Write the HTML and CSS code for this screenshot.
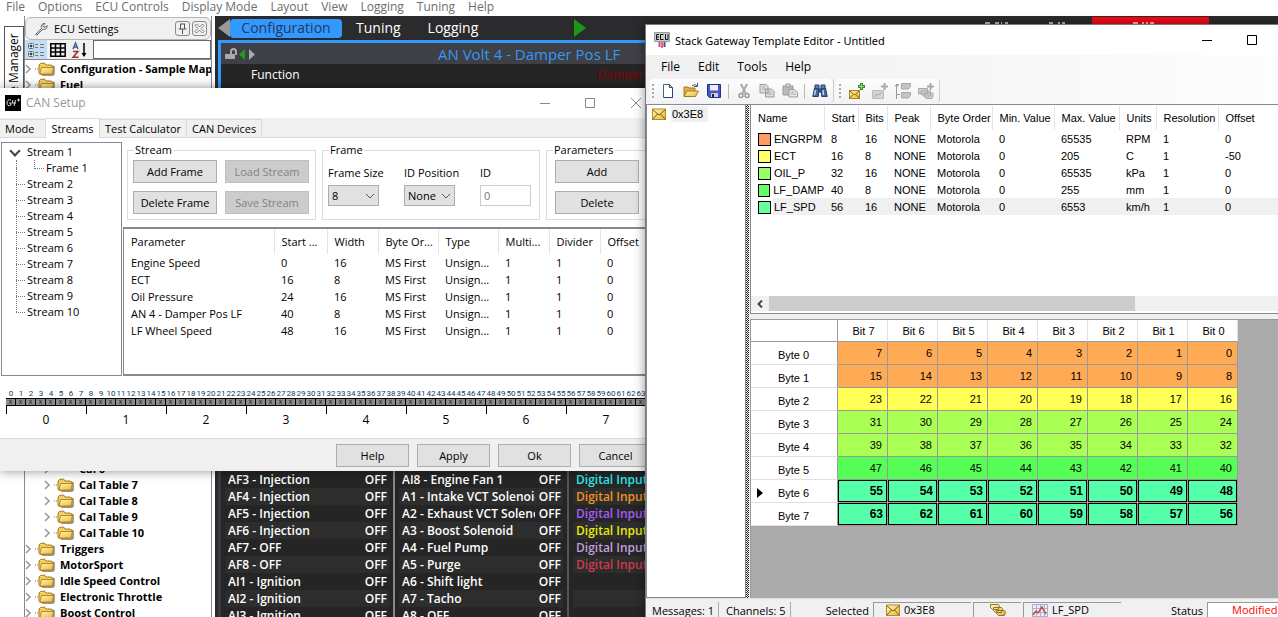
FILE: index.html
```html
<!DOCTYPE html>
<html lang="en">
<head>
<meta charset="utf-8">
<title>Stack Gateway Template Editor</title>
<link rel="stylesheet" href="styles.css">
</head>
<body>
<svg class="defs" aria-hidden="true">
  <defs>
    <linearGradient id="gold" x1="0" y1="0" x2="1" y2="1"><stop offset="0" stop-color="#fff6b8"/><stop offset="1" stop-color="#e8b83a"/></linearGradient>
    <symbol id="folder" viewBox="0 0 17 14"><path d="M14 4l2 1v7l-1 1H4" fill="none" stroke="#777" stroke-width="1.4"/><path d="M1 11.500V3l1.500-1.500 4-.5L8 3h5l1.500 1.500v7l-1 .8H2z" fill="#f2cf5e" stroke="#a8781c"/><path d="M2 12l1.500-6.500h12L14 12z" fill="url(#gold)" stroke="#b98a22"/></symbol>
    <symbol id="chev" viewBox="0 0 13 10"><path d="M1 1l4 4-4 4" fill="none" stroke="#999" stroke-width="1.600"/><path d="M10 5h1M12 5h1" stroke="#777"/></symbol>
    <symbol id="mail" viewBox="0 0 14 12"><rect x=".5" y="1" width="13" height="10.500" fill="url(#gold)" stroke="#b48a20"/><path d="M1 2l6 5 6-5M1 11l4.500-5M13 11L8.500 6" fill="none" stroke="#7a5e10"/></symbol>
  </defs>
</svg>

<div class="app">
  <nav class="menubar">
    <a href="#">File</a><a href="#">Options</a><a href="#">ECU Controls</a><a href="#">Display Mode</a><a href="#">Layout</a><a href="#">View</a><a href="#">Logging</a><a href="#">Tuning</a><a href="#">Help</a>
  </nav>
  <div class="workspace">
    <div class="dock"><button class="dock-tab">File Manager</button></div>
    <aside class="settings">
      <header class="settings-head">
        <svg width="14" height="14" viewBox="0 0 14 14"><path d="M1.500 12.500l6-6C6.500 4 8 1 11 1.500L9 3.500l1 1.500 1.500 0 1.500-1.500c.5 3-2 4.500-4.500 4l-5.500 5.500z" fill="#ddd" stroke="#666"/></svg>
        <h2>ECU Settings</h2>
        <button class="mini" aria-label="Pin"><svg width="11" height="11" viewBox="0 0 11 11"><path d="M3.500 1v5M7.500 1v5M3 1h5M1.500 6h8M5.500 6v5" fill="none" stroke="#555"/></svg></button>
        <button class="mini" aria-label="Close"><svg width="11" height="11" viewBox="0 0 11 11"><path d="M1 2.500L2.500 1l3 3 3-3L10 2.500l-3 3 3 3L8.500 10l-3-3-3 3L1 8.500l3-3z" fill="#fff" stroke="#555" stroke-width=".8"/></svg></button>
      </header>
      <div class="settings-tools">
        <button class="tool on" aria-label="Tree view"><svg width="18" height="18" viewBox="0 0 18 18"><rect x="1.500" y="2.500" width="5" height="5" rx="1" fill="#fff" stroke="#666"/><rect x="1.500" y="10.500" width="5" height="5" rx="1" fill="#fff" stroke="#666"/><path d="M2.500 5h3M4 3.500v3M2.500 13h3M4 11.500v3" stroke="#000"/><path d="M8 3.500h3M13 3.500h4M8 6.500h3M13 6.500h4M8 11.500h3M13 11.500h4M8 14.500h3M13 14.500h4" stroke="#777"/></svg></button>
        <button class="tool" aria-label="Grid view"><svg width="16" height="14" viewBox="0 0 16 14"><path d="M.8.8h14.400v12.400H.8zM5.500 1v12M10.500 1v12M1 5h14M1 9h14" fill="none" stroke="#000" stroke-width="1.500"/></svg></button>
        <button class="tool" aria-label="Sort"><svg width="18" height="18" viewBox="0 0 18 18"><path d="M2 8l2.500-6L7 8M3 6h3" fill="none" stroke="#3b5b9b" stroke-width="1.400"/><path d="M2 10.500h5L2 16.300h5.500" fill="none" stroke="#a03030" stroke-width="1.500"/><path d="M13 2v13" stroke="#000" stroke-width="1.500"/><path d="M10.500 12h5L13 16z"/></svg></button>
        <input type="text" aria-label="Search settings">
      </div>
      <ul class="tree">
        <li><svg class="c"><use href="#chev"/></svg><svg class="f"><use href="#folder"/></svg>Configuration - Sample Map</li>
        <li><svg class="c"><use href="#chev"/></svg><svg class="f"><use href="#folder"/></svg>Fuel</li>
        <li class="tree-gap"></li>
        <li class="sub"><svg class="c"><use href="#chev"/></svg><span>Cal 6</span></li>
        <li class="sub"><svg class="c"><use href="#chev"/></svg><svg class="f"><use href="#folder"/></svg>Cal Table 7</li>
        <li class="sub"><svg class="c"><use href="#chev"/></svg><svg class="f"><use href="#folder"/></svg>Cal Table 8</li>
        <li class="sub"><svg class="c"><use href="#chev"/></svg><svg class="f"><use href="#folder"/></svg>Cal Table 9</li>
        <li class="sub"><svg class="c"><use href="#chev"/></svg><svg class="f"><use href="#folder"/></svg>Cal Table 10</li>
        <li><svg class="c"><use href="#chev"/></svg><svg class="f"><use href="#folder"/></svg>Triggers</li>
        <li><svg class="c"><use href="#chev"/></svg><svg class="f"><use href="#folder"/></svg>MotorSport</li>
        <li><svg class="c"><use href="#chev"/></svg><svg class="f"><use href="#folder"/></svg>Idle Speed Control</li>
        <li><svg class="c"><use href="#chev"/></svg><svg class="f"><use href="#folder"/></svg>Electronic Throttle</li>
        <li><svg class="c"><use href="#chev"/></svg><svg class="f"><use href="#folder"/></svg>Boost Control</li>
      </ul>
    </aside>
    <main class="stage">
      <div class="pages">
        <svg class="prev" width="12" height="18" viewBox="0 0 12 18"><path d="M12 0v18L0 9z" fill="#999"/></svg>
        <button class="page on">Configuration</button><button class="page">Tuning</button><button class="page">Logging</button>
        <svg class="play" width="12" height="18" viewBox="0 0 12 18"><path d="M0 0v18l12-9z" fill="#1a961a"/></svg>
        <svg class="marks" width="90" height="2" viewBox="0 0 90 2"><path d="M1 1h5M11 1h4M17 1h1M21 1h3M65 1h4M74 1h2M78 1h3" stroke="#bbb" stroke-width="2"/></svg>
        <span class="alert"><svg width="24" height="2" viewBox="0 0 24 2"><path d="M1 1h5M10 1h2M14 1h2M18 1h4" stroke="#fbb" stroke-width="2"/></svg></span>
      </div>
      <section class="chart">
        <div class="chart-head">
          <svg width="32" height="14" viewBox="0 0 32 14"><path d="M6 8V4.500Q6 2 8.500 2T11 4.500V8" fill="none" stroke="#aaa" stroke-width="2"/><path d="M0 7h10v5H0z" fill="#aaa"/><path d="M20 2v11l-6-5.500z" fill="#1f9c1f"/><path d="M24 2v11l6-5.500z" fill="#aaa"/></svg>
          <h3>AN Volt 4 - Damper Pos LF</h3>
        </div>
        <div class="chart-row"><span>Function</span><span class="value">Damper Pos</span></div>
      </section>
      <div class="status-lists">
        <ul>
          <li><span>AF3 - Injection</span><b>OFF</b></li><li><span>AF4 - Injection</span><b>OFF</b></li><li><span>AF5 - Injection</span><b>OFF</b></li><li><span>AF6 - Injection</span><b>OFF</b></li><li><span>AF7 - OFF</span><b>OFF</b></li><li><span>AF8 - OFF</span><b>OFF</b></li><li><span>AI1 - Ignition</span><b>OFF</b></li><li><span>AI2 - Ignition</span><b>OFF</b></li><li><span>AI3 - Ignition</span><b>OFF</b></li>
        </ul>
        <ul>
          <li><span>AI8 - Engine Fan 1</span><b>OFF</b></li><li><span>A1 - Intake VCT Solenoid</span><b>OFF</b></li><li><span>A2 - Exhaust VCT Solenoid</span><b>OFF</b></li><li><span>A3 - Boost Solenoid</span><b>OFF</b></li><li><span>A4 - Fuel Pump</span><b>OFF</b></li><li><span>A5 - Purge</span><b>OFF</b></li><li><span>A6 - Shift light</span><b>OFF</b></li><li><span>A7 - Tacho</span><b>OFF</b></li><li><span>A8 - OFF</span><b>OFF</b></li>
        </ul>
        <ul class="inputs">
          <li class="cyan">Digital Input</li><li class="orange">Digital Input</li><li class="purple">Digital Input</li><li class="yellow">Digital Input</li><li class="lilac">Digital Input</li><li class="red">Digital Input</li><li></li><li></li><li></li>
        </ul>
      </div>
    </main>
  </div>
</div>

<section class="window can">
  <header class="can-title">
    <svg width="16" height="16" viewBox="0 0 16 16"><rect width="16" height="16"/><path d="M6 5Q2 4 2 8t4 2V8H4M8 5L7 8h4M10.500 5L9 11M12 5h3M13.500 3.500v3" fill="none" stroke="#ddd"/></svg>
    <h1>CAN Setup</h1>
    <svg class="controls" width="102" height="12" viewBox="0 0 102 12"><path d="M0 6.500h10M45.500 1.500h9v9h-9zM91 1l10 10M101 1L91 11" fill="none" stroke="#888"/></svg>
  </header>
  <div class="tabs" role="tablist"><button role="tab">Mode</button><button role="tab" class="on">Streams</button><button role="tab">Test Calculator</button><button role="tab">CAN Devices</button></div>
  <div class="can-body">
    <ul class="streams">
      <li class="open">Stream 1<ul><li>Frame 1</li></ul></li>
      <li>Stream 2</li><li>Stream 3</li><li>Stream 4</li><li>Stream 5</li><li>Stream 6</li><li>Stream 7</li><li>Stream 8</li><li>Stream 9</li><li>Stream 10</li>
    </ul>
    <div class="can-main">
      <div class="groups">
        <fieldset class="g-stream"><legend>Stream</legend>
          <button class="btn">Add Frame</button><button class="btn" disabled>Load Stream</button><button class="btn">Delete Frame</button><button class="btn" disabled>Save Stream</button>
        </fieldset>
        <fieldset class="g-frame"><legend>Frame</legend>
          <label>Frame Size<select><option>8</option></select></label>
          <label>ID Position<select><option>None</option></select></label>
          <label>ID<input type="text" value="0" disabled></label>
        </fieldset>
        <fieldset class="g-params"><legend>Parameters</legend><button class="btn">Add</button><button class="btn">Delete</button></fieldset>
      </div>
      <div class="param-box">
        <table class="params">
          <colgroup><col class="w150"><col class="w53"><col class="w51"><col class="w60"><col class="w60"><col class="w51"><col class="w51"><col class="w60"></colgroup>
          <thead><tr><th>Parameter</th><th>Start ...</th><th>Width</th><th>Byte Or...</th><th>Type</th><th>Multi...</th><th>Divider</th><th>Offset</th></tr></thead>
          <tbody>
            <tr><td>Engine Speed</td><td>0</td><td>16</td><td>MS First</td><td>Unsign...</td><td>1</td><td>1</td><td>0</td></tr>
            <tr><td>ECT</td><td>16</td><td>8</td><td>MS First</td><td>Unsign...</td><td>1</td><td>1</td><td>0</td></tr>
            <tr><td>Oil Pressure</td><td>24</td><td>16</td><td>MS First</td><td>Unsign...</td><td>1</td><td>1</td><td>0</td></tr>
            <tr><td>AN 4 - Damper Pos LF</td><td>40</td><td>8</td><td>MS First</td><td>Unsign...</td><td>1</td><td>1</td><td>0</td></tr>
            <tr><td>LF Wheel Speed</td><td>48</td><td>16</td><td>MS First</td><td>Unsign...</td><td>1</td><td>1</td><td>0</td></tr>
          </tbody>
        </table>
      </div>
    </div>
  </div>
  <div class="ruler" id="ruler"></div>
  <footer class="can-foot"><button class="btn">Help</button><button class="btn">Apply</button><button class="btn">Ok</button><button class="btn">Cancel</button></footer>
</section>

<section class="window gateway">
  <header class="gw-title">
    <svg width="16" height="17" viewBox="0 0 16 17"><path d="M.5.500h15v9H.5z" fill="#ccc" stroke="#999"/><path d="M5 2.500H2.500v5H5M2.500 5H5M9.500 2.500h-3v5h3M11.500 2v5.500H14V2" fill="none" stroke="#111"/><path d="M5.500 10v5" stroke="#d33bd3" stroke-width="2"/><path d="M8 10v6" stroke="#e08030" stroke-width="2"/><path d="M10.500 10v5" stroke="#5040c0" stroke-width="2"/></svg>
    <h1>Stack Gateway Template Editor - Untitled</h1>
    <svg class="controls" width="56" height="12" viewBox="0 0 56 12"><path d="M0 6.500h10M45.500 1.500h9v9h-9z" fill="none" stroke="#000"/></svg>
  </header>
  <div class="gw-bars">
    <nav class="gw-menu"><a href="#">File</a><a href="#">Edit</a><a href="#">Tools</a><a href="#">Help</a></nav>
    <div class="strips">
      <div class="strip">
        <i class="grip"></i>
        <button aria-label="New"><svg width="16" height="16" viewBox="0 0 16 16"><path d="M3.500 1.500h6l3 3v10h-9z" fill="#fff" stroke="#4a6484"/><path d="M9.500 1.500v3h3M12.500 5v9.500h-8" fill="none" stroke="#345"/></svg></button>
        <button aria-label="Open"><svg width="16" height="16" viewBox="0 0 16 16"><path d="M1 13V4h4l1 1h6v3" fill="#e5ad3c" stroke="#a87820"/><path d="M1 13.500L4 8h11.500l-3 5.500z" fill="url(#gold)" stroke="#a87820"/><path d="M9 3q3-3 5 0M14.500 0v3.500H11" fill="none" stroke="#456"/></svg></button>
        <button aria-label="Save"><svg width="16" height="16" viewBox="0 0 16 16"><path d="M1.500 1.500h13v13h-11l-2-2z" fill="#4a55c8" stroke="#24308c"/><path d="M4 2h8v5.500H4z" fill="#eef"/><path d="M5 10h7v4H5z" fill="#ccd"/><path d="M6 11h2v3H6z" fill="#223"/></svg></button>
        <i class="sep"></i>
        <button disabled aria-label="Cut"><svg width="16" height="16" viewBox="0 0 16 16"><path d="M5 1l5 10M11 1L6 11" fill="none" stroke="#aaa" stroke-width="2"/><circle cx="5" cy="12.500" r="2" fill="none" stroke="#999" stroke-width="1.500"/><circle cx="11" cy="12.500" r="2" fill="none" stroke="#999" stroke-width="1.500"/></svg></button>
        <button disabled aria-label="Copy"><svg width="16" height="16" viewBox="0 0 16 16"><path d="M1 1.500h6l2 2V10H1zM6.500 6h6l2.500 2.500V14H6.500z" fill="#ddd" stroke="#999"/><path d="M3 4h3M3 6h3M8 9h4M8 11h5" stroke="#aaa"/></svg></button>
        <button disabled aria-label="Paste"><svg width="16" height="16" viewBox="0 0 16 16"><path d="M1 3h10v9H1z" fill="#bbb" stroke="#999"/><path d="M4 1h4v3H4z" fill="#ddd" stroke="#999"/><path d="M7 6.500h5l3.500 3V14H7z" fill="#e8e8e8" stroke="#999"/><path d="M9 9h3M9 11h5" stroke="#aaa"/></svg></button>
        <i class="sep"></i>
        <button aria-label="Find"><svg width="16" height="16" viewBox="0 0 16 16"><path d="M3 2h4v4H3zM9 2h4v4H9z" fill="#5d82b8" stroke="#23406e"/><path d="M2.500 5L.8 13.500h5.500L7 6zM13.500 5l1.700 8.500H9.700L9 6zM6.500 6h3v3h-3z" fill="#3f66a0" stroke="#23406e"/><path d="M3.500 7L2.500 12M11 7l.5 5" stroke="#bcd4f2" stroke-width="1.500"/></svg></button>
      </div>
      <div class="strip second">
        <i class="grip"></i>
        <button aria-label="Add message"><svg width="18" height="18" viewBox="0 0 18 18"><rect x="1.500" y="8.500" width="10" height="8" fill="url(#gold)" stroke="#a8841c"/><path d="M2 9l4.500 4L11 9M2 16l3-3.500M11 16l-3-3.500" fill="none" stroke="#7a5e10"/><path d="M13.500 1v7M10 4.500h7" stroke="#2f8f2f" stroke-width="3"/><path d="M13.500 2v5M11 4.500h5" stroke="#8fdd7f"/></svg></button>
        <button disabled aria-label="Add channel"><svg width="18" height="18" viewBox="0 0 18 18"><path d="M1.500 8.500h11v8h-11z" fill="#d4d4d4" stroke="#bbb"/><path d="M3 15l3-3 2 1 3-3" fill="none" stroke="#aaa"/><path d="M13.500 1v7M10 4.500h7" stroke="#aaa" stroke-width="2"/></svg></button>
        <button disabled aria-label="Move"><svg width="18" height="18" viewBox="0 0 18 18"><path d="M5 2.500H2.500V17M.5 4.500l2-2 2 2" fill="none" stroke="#999"/><path d="M7.500 1.500h9v3l-2 2.500h-7zM7.500 10.500h9v3l-2 2.500h-7z" fill="#c4c4c4" stroke="#aaa"/><path d="M3 12.500h3" stroke="#999"/></svg></button>
        <button disabled aria-label="Duplicate"><svg width="18" height="18" viewBox="0 0 18 18"><path d="M1.500 6.500h9V12h-9zM4.500 9h9v5h-7l-2-2zM8 11h8v3.500l-1 2H9l-2-2z" fill="#ccc" stroke="#aaa"/><path d="M13.500 1v7M10 4.500h7" stroke="#aaa" stroke-width="2"/></svg></button>
      </div>
    </div>
  </div>
  <div class="gw-body">
    <ul class="messages"><li><svg width="14" height="12"><use href="#mail"/></svg><span>0x3E8</span></li></ul>
    <div class="splitter"></div>
    <div class="gw-main">
      <div class="channel-box">
        <table class="channels">
          <colgroup><col class="c73"><col class="c34"><col class="c29"><col class="c43"><col class="c62"><col class="c62"><col class="c65"><col class="c37"><col class="c62"><col></colgroup>
          <thead><tr><th>Name</th><th>Start</th><th>Bits</th><th>Peak</th><th>Byte Order</th><th>Min. Value</th><th>Max. Value</th><th>Units</th><th>Resolution</th><th>Offset</th></tr></thead>
          <tbody>
            <tr><td><div class="name"><i class="sw s1"></i>ENGRPM</div></td><td>8</td><td>16</td><td>NONE</td><td>Motorola</td><td>0</td><td>65535</td><td>RPM</td><td>1</td><td>0</td></tr>
            <tr><td><div class="name"><i class="sw s2"></i>ECT</div></td><td>16</td><td>8</td><td>NONE</td><td>Motorola</td><td>0</td><td>205</td><td>C</td><td>1</td><td>-50</td></tr>
            <tr><td><div class="name"><i class="sw s3"></i>OIL_P</div></td><td>32</td><td>16</td><td>NONE</td><td>Motorola</td><td>0</td><td>65535</td><td>kPa</td><td>1</td><td>0</td></tr>
            <tr><td><div class="name"><i class="sw s4"></i>LF_DAMP</div></td><td>40</td><td>8</td><td>NONE</td><td>Motorola</td><td>0</td><td>255</td><td>mm</td><td>1</td><td>0</td></tr>
            <tr class="sel"><td><div class="name"><i class="sw s5"></i>LF_SPD</div></td><td>56</td><td>16</td><td>NONE</td><td>Motorola</td><td>0</td><td>6553</td><td>km/h</td><td>1</td><td>0</td></tr>
          </tbody>
        </table>
        <div class="hscroll"><button aria-label="Scroll left"><svg width="6" height="8" viewBox="0 0 6 8"><path d="M5 .5L1.500 4 5 7.500" fill="none" stroke="#444" stroke-width="2"/></svg></button><i class="thumb"></i></div>
      </div>
      <div class="bits-box">
        <table class="bits"><thead><tr id="bits-head"><th></th></tr></thead><tbody id="bits-body"></tbody></table>
      </div>
    </div>
  </div>
  <footer class="gw-status">
    <span class="cell msgs">Messages: 1</span><span class="cell chans">Channels: 5</span><span class="selected">Selected</span>
    <span class="pane p-msg"><svg width="14" height="12"><use href="#mail"/></svg>0x3E8</span>
    <span class="pane p-stack"><svg width="16" height="13" viewBox="0 0 16 13"><path d="M.5.500h8l1 1-1 4h-6l-2-2zM3.500 3.500h8l1 1-1 4h-6l-2-2zM6.500 6.500h8l1 1-1 4h-6l-2-2z" fill="url(#gold)" stroke="#8d7430"/></svg></span>
    <span class="pane p-chan"><svg width="16" height="13" viewBox="0 0 16 13"><path d="M.5.500h15v12H.5zM4.500 0v13M8.500 0v13M12.500 0v13M0 4.500h16M0 8.500h16" fill="#e8eef8" stroke="#a4b2cf"/><path d="M1 11l3-4 2 2 4-6 2 4 2 3" fill="none" stroke="#d04040" stroke-width="1.400"/></svg>LF_SPD</span>
    <span class="state">Status</span><span class="pane modified">Modified</span>
  </footer>
</section>
<script src="script.js"></script>
</body>
</html>
```

FILE: styles.css
```css
* { box-sizing: border-box; }
body { margin: 0; height: 100vh; overflow: hidden; position: relative; background: #fff; color: #000; font: 11px/16px "Open Sans", "Noto Sans", sans-serif; }
h1, h2, h3, ul { margin: 0; padding: 0; font: inherit; list-style: none; }
button, input, select { font: inherit; color: inherit; margin: 0; padding: 0; border: 0; background: none; border-radius: 0; }
svg { display: block; flex: none; }
a { color: inherit; text-decoration: none; }
table { border-collapse: collapse; table-layout: fixed; }
th, td { padding: 0; font-weight: inherit; text-align: left; white-space: nowrap; }
.defs { position: absolute; width: 0; height: 0; }

/* background application */
.app { height: 100%; display: flex; flex-direction: column; }
.menubar { display: flex; gap: 13px; height: 16px; flex: none; padding-left: 6px; font-size: 12px; line-height: 13px; color: #6d6d6d; white-space: nowrap; }
.workspace { flex: 1; min-height: 0; display: flex; }
.dock { width: 24px; flex: none; padding: 10px 0 0 4px; }
.dock-tab { width: 20px; height: 110px; padding-bottom: 6px; border: 1px solid #555; writing-mode: vertical-rl; transform: rotate(180deg); font-size: 12px; text-align: right; white-space: nowrap; }
.settings { width: 188px; flex: none; border: 1px solid #858a94; border-width: 0 1px; overflow: hidden; }
.settings-head { display: flex; align-items: center; height: 23px; margin-top: 1px; padding: 0 3px 0 8px; border: 1px solid #b5b5b5; border-radius: 6px; background: #f0f0f0; }
.settings-head h2 { flex: 1; padding-left: 6px; font-size: 11px; }
.mini { display: grid; place-items: center; width: 15px; height: 15px; margin-left: 2px; border: 1px solid #888; border-radius: 3px; }
.settings-tools { display: flex; height: 20px; background: #f0f0f0; border-bottom: 1px solid #888; }
.tool { width: 22px; display: grid; place-items: center; }
.tool.on { background: #c2dff5; }
.settings-tools input { flex: 1; min-width: 0; margin-left: 2px; border: 1px solid #666; background: #fff; }
.tree { padding-top: 1px; font-weight: 700; }
.tree li { display: flex; align-items: center; height: 16px; white-space: nowrap; }
.tree .sub { padding-left: 19px; }
.tree .sub span { padding-left: 22px; }
.tree .tree-gap { height: 368px; }
.c { width: 13px; height: 10px; }
.f { width: 17px; height: 14px; margin-right: 5px; }
.stage { flex: 1; min-width: 0; margin-left: 3px; background: #2b2b2d; color: #fff; }
.pages { display: flex; align-items: center; height: 24px; padding-left: 3px; font-size: 14px; }
.page { height: 19px; margin-right: 14px; line-height: 18px; }
.page.on { width: 112px; background: #3399ff; color: #223a5c; border-radius: 4px; }
.page + .page + .page { margin-left: 13px; }
.play { margin-left: 82px; }
.marks { align-self: flex-start; margin: 6px 0 0 398px; }
.alert { width: 117px; height: 8px; margin: 1px 0 0 18px; padding: 5px 0 0 40px; align-self: flex-start; background: #f30a16; }
.chart { height: 431px; margin-left: 3px; border: 3px solid #3399ff; background: #252525; }
.chart-head { display: flex; align-items: center; height: 21px; padding-left: 4px; background: #3f3f46; }
.chart-head h3 { margin-left: 181px; font-size: 15px; color: #3399f5; white-space: nowrap; }
.chart-row { display: flex; padding: 2px 0 0 30px; font-size: 12px; line-height: 18px; white-space: nowrap; }
.chart-row .value { margin-left: 298px; color: #8c0000; }
.status-lists { display: flex; gap: 10px; padding-left: 4px; margin-left: 3px; font-size: 12px; font-weight: 600; line-height: 17px; background: #252525; border-left: 3px solid #3a3a42; }
.status-lists ul { width: 164px; flex: none; }
.status-lists ul + ul { box-shadow: -4px 0 0 #252525, -6px 0 0 #888; }
.status-lists .inputs { flex: 1; box-shadow: -4px 0 0 #252525, -6px 0 0 #555; }
.status-lists li { display: flex; justify-content: space-between; height: 17px; padding: 0 2px 0 3px; white-space: nowrap; }
.status-lists li:nth-child(even) { background: #2d2d2d; }
.status-lists span { overflow: hidden; width: 133px; }
.status-lists b { font-weight: inherit; }
.cyan { color: #2ce6e6; } .orange { color: #ef9320; } .purple { color: #a55cf5; } .yellow { color: #e8e80a; } .lilac { color: #c0a0d8; } .red { color: #d03a4c; }

/* CAN Setup */
.window { position: absolute; display: flex; flex-direction: column; background: #fff; box-shadow: 0 0 10px rgba(0, 0, 0, .45); }
.can { left: 0; top: 88px; width: 656px; }
.can-title { display: flex; align-items: center; height: 30px; padding-left: 5px; color: #999; font-size: 12px; }
.can-title h1 { flex: 1; padding-left: 5px; }
.can .controls { margin-right: 14px; }
.tabs { display: flex; align-items: flex-end; height: 20px; background: #f0f0f0; border-bottom: 1px solid #d9d9d9; }
.tabs button { height: 18px; padding: 0 5px; border: 1px solid #d9d9d9; border-width: 1px 1px 0 0; }
.tabs button:first-child { width: 46px; text-align: left; }
.tabs .on { height: 20px; width: 54px; margin-bottom: -1px; background: #fff; }
.can-body { display: flex; height: 238px; padding: 4px 0 0 1px; }
.streams { width: 121px; flex: none; border: 1px solid #858a94; padding: 1px 0 0 12px; }
.streams > li { position: relative; padding-left: 13px; }
.streams > li::before { content: ""; position: absolute; left: 2px; top: 8px; width: 9px; border-top: 1px dotted #777; }
.streams > li::after { content: ""; position: absolute; left: 2px; top: -8px; height: 16px; border-left: 1px dotted #777; }
.streams > .open::before { left: -3px; top: 3px; width: 6px; height: 6px; border: solid #444; border-width: 0 2px 2px 0; transform: rotate(45deg); }
.streams > .open::after { top: 16px; }
.streams ul { margin-left: 8px; padding-left: 11px; }
.streams ul li { position: relative; }
.streams ul li::before { content: ""; position: absolute; left: -12px; top: 0; width: 9px; height: 8px; border: dotted #777; border-width: 0 0 1px 1px; }
.can-main { flex: 1; min-width: 0; margin-left: 1px; display: flex; flex-direction: column; }
.groups { display: flex; gap: 6px; padding: 0 0 7px 4px; }
fieldset { margin: 0; min-width: 0; border: 1px solid #dcdcdc; height: 78px; padding: 2px 5px 0; }
legend { padding: 0 1px; margin-left: 1px; line-height: 16px; }
.btn { height: 23px; border: 1px solid #adadad; background: #e1e1e1; }
.btn:disabled { background: #ccc; border-color: #bfbfbf; color: #838383; }
.g-stream { width: 189px; display: grid; grid-template-columns: 84px 84px; gap: 8px; align-content: start; }
.g-frame { width: 218px; display: flex; gap: 25px; }
.g-frame label { width: 51px; padding-top: 5px; white-space: nowrap; }
.g-frame select, .g-frame input { display: block; width: 51px; height: 21px; margin-top: 4px; padding-left: 3px; border: 1px solid #adadad; }
.g-frame select { appearance: none; background: #e1e1e1 url("data:image/svg+xml,%3Csvg xmlns='http://www.w3.org/2000/svg' width='10' height='6'%3E%3Cpath d='M1 1l4 4 4-4' fill='none' stroke='%23555'/%3E%3C/svg%3E") no-repeat right 3px center; }
.g-frame input { color: #777; background: #fff; border-color: #ccc; }
.g-params { flex: 1; display: grid; grid-template-columns: 84px; gap: 8px; align-content: start; padding-left: 8px; }
.g-params legend { margin-left: -2px; }
.param-box { flex: 1; border: 2px solid #858a94; border-width: 2px 0 2px 1px; overflow: hidden; }
.params { width: 536px; }
.params th { height: 25px; padding-left: 7px; border-right: 1px solid #e5e5e5; }
.params td { height: 17px; padding-left: 7px; line-height: 17px; }
.w150 { width: 150px; } .w53 { width: 53px; } .w51 { width: 51px; } .w60 { width: 60px; }
.ruler { display: flex; height: 63px; padding: 14px 0 0 6px; border-bottom: 1px solid #d9d9d9; overflow: hidden; }
.byte { width: 80px; flex: none; text-align: center; font-size: 12px; line-height: 12px; }
.byte-bits { display: flex; font: 8px/8px Roboto, sans-serif; }
.byte-bits span { width: 10px; display: block; white-space: nowrap; color: #123c5c; }
.byte-bits i { display: block; height: 8px; border: 1px solid #000; border-width: 1px 1px 1px 0; background: #8c8c8c; color: #222; font-style: normal; font-size: 7px; line-height: 6px; }
.byte p { margin: 0; height: 8px; border-left: 1px solid #000; }
.can-foot { display: flex; justify-content: flex-end; gap: 8px; height: 32px; padding: 5px 4px 0 0; background: #f0f0f0; }
.can-foot .btn { width: 73px; }

/* Stack Gateway Template Editor */
.gateway { left: 645px; right: 0; top: 24px; bottom: 0; border: 1px solid #7a7a7a; border-width: 1px 0 0 1px; font-family: "Liberation Sans", Arial, sans-serif; }
.gw-title { display: flex; align-items: center; height: 30px; flex: none; padding-left: 8px; font: 12px "Noto Sans", "Open Sans", sans-serif; font-size: 11px; }
.gw-title h1 { flex: 1; padding-left: 5px; }
.gateway .controls { margin-right: 20px; }
.gw-bars { height: 50px; flex: none; background: linear-gradient(90deg, #f0f0f0, #fdfdfd); border-bottom: 1px solid #858a94; }
.gw-menu { display: flex; gap: 18px; height: 24px; padding-left: 15px; font: 12px/24px "Open Sans", sans-serif; }
.strips { display: flex; gap: 2px; padding-left: 3px; }
.strip { display: flex; align-items: center; height: 24px; padding: 0 2px 0 3px; border-radius: 4px; background: linear-gradient(#fdfdfd, #f2f2f2); border-right: 1px solid #ccc; }
.strip button { width: 23px; display: grid; place-items: center; }
.strip .grip { width: 2px; height: 15px; margin-right: 2px; background: repeating-linear-gradient(#aaa 0 2px, transparent 2px 4px); }
.strip .sep { width: 1px; height: 15px; margin: 0 3px; background: #bbb; }
.strip.second .grip { margin-right: 4px; }
.gw-body { flex: 1; min-height: 0; display: flex; background: #f0f0f0; }
.messages { width: 100px; flex: none; border: 1px solid #858a94; border-top: 0; background: #fff; padding: 1px 0 0 5px; }
.messages li { display: flex; align-items: center; gap: 5px; }
.messages span { padding: 0 5px 0 1px; background: #f0f0f0; }
.splitter { width: 4px; flex: none; background: repeating-conic-gradient(#222 0 25%, #fff 0 50%) 0 0 / 2px 2px; border-right: 1px solid #f0f0f0; }
.gw-main { flex: 1; min-width: 0; display: flex; flex-direction: column; gap: 5px; }
.channel-box { height: 209px; flex: none; display: flex; flex-direction: column; border: 1px solid #858a94; border-width: 0 0 1px 1px; background: #fff; }
.channels { width: 100%; margin-top: 1px; }
.channels th { height: 24px; padding-left: 7px; border-right: 1px solid #e5e5e5; }
.channels th:last-child { border: 0; }
.channels td { height: 17px; padding: 1px 0 0 7px; line-height: 16px; }
.channels .sel td { background: #f0f0f0; }
.channels .sel td:first-child { background: linear-gradient(90deg, #fff 22px, #f0f0f0 22px); }
.name { display: flex; gap: 3px; align-items: center; }
.c73 { width: 73px; } .c34 { width: 34px; } .c29 { width: 29px; } .c43 { width: 43px; } .c62 { width: 62px; } .c65 { width: 65px; } .c37 { width: 37px; }
.sw { width: 13px; height: 13px; border: 1px solid #000; }
.s1 { background: #ff9966; } .s2 { background: #ffff66; } .s3 { background: #99ff66; } .s4 { background: #66ff66; } .s5 { background: #66ff99; }
.hscroll { display: flex; height: 17px; margin-top: auto; background: #f0f0f0; border-bottom: 2px solid #fff; }
.hscroll button { width: 18px; display: grid; place-items: center; }
.thumb { width: 72%; max-width: 366px; background: #cdcdcd; }
.bits-box { flex: 1; border: 1px solid #999; border-width: 1px 0 0 1px; background: #ababab; overflow: hidden; }
.bits { width: 487px; border-collapse: separate; border-spacing: 0; background: #fff; }
.bits th { text-align: center; border: 1px solid #e0e0e0; border-width: 0 1px 1px 0; }
.bits thead th { width: 50px; height: 22px; padding-left: 2px; border-bottom-color: #999; }
.bits thead th:first-child { width: 87px; border-right-color: #999; }
.bits tbody th { height: 23px; padding: 3px 1px 0 0; position: relative; border-right-color: #999; }
.bits tbody th svg { position: absolute; left: 6px; top: 8px; }
.bits td { padding-right: 5px; text-align: right; border: 1px solid #999; border-width: 0 1px 1px 0; }
.b0 td { background: #ffaa55; } .b2 td { background: #ffff55; } .b3 td { background: #aaff55; } .b5 td { background: #55ff55; }
.b6 td { background: #55ffaa; font-weight: 700; font-size: 12px; padding-right: 4px; box-shadow: inset 0 0 0 1px #000; }
.gw-status { display: flex; align-items: stretch; height: 19px; flex: none; padding: 3px 0 0; border-top: 1px solid #ddd; background: #f0f0f0; font: 11px/18px "Open Sans", sans-serif; white-space: nowrap; overflow: hidden; }
.cell { border-right: 1px solid #aaa; padding-left: 6px; }
.msgs { width: 73px; }
.chans { width: 72px; padding-left: 7px; }
.selected { width: 82px; padding-right: 4px; text-align: right; }
.pane { display: flex; align-items: center; gap: 4px; border: 1px solid #999; border-width: 1px 0 0 1px; }
.p-msg { width: 98px; padding-left: 12px; }
.p-stack { width: 48px; margin-left: 2px; padding-left: 16px; }
.p-chan { width: 98px; margin-left: 2px; padding-left: 8px; }
.state { flex: 1; padding-right: 4px; text-align: right; }
.modified { width: 71px; padding-left: 24px; background: #fff; color: #f00; }
```

FILE: script.js
```js
const ruler = document.getElementById("ruler");
for (let b = 0; b < 8; b++) {
  let cells = "";
  for (let i = 0; i < 8; i++) cells += `<span>${b * 8 + i}<i>x</i></span>`;
  ruler.insertAdjacentHTML("beforeend", `<div class="byte"><div class="byte-bits">${cells}</div><p></p>${b}</div>`);
}

const head = document.getElementById("bits-head");
for (let i = 7; i >= 0; i--) head.insertAdjacentHTML("beforeend", `<th>Bit ${i}</th>`);

const rowClass = ["b0", "b0", "b2", "b3", "b3", "b5", "b6", "b6"];
const body = document.getElementById("bits-body");
const marker = '<svg width="6" height="10" viewBox="0 0 6 10"><path d="M0 0v10l6-5z"/></svg>';
for (let b = 0; b < 8; b++) {
  let row = `<th>${b === 6 ? marker : ""}Byte ${b}</th>`;
  for (let i = 7; i >= 0; i--) row += `<td>${b * 8 + i}</td>`;
  body.insertAdjacentHTML("beforeend", `<tr class="${rowClass[b]}">${row}</tr>`);
}
```
